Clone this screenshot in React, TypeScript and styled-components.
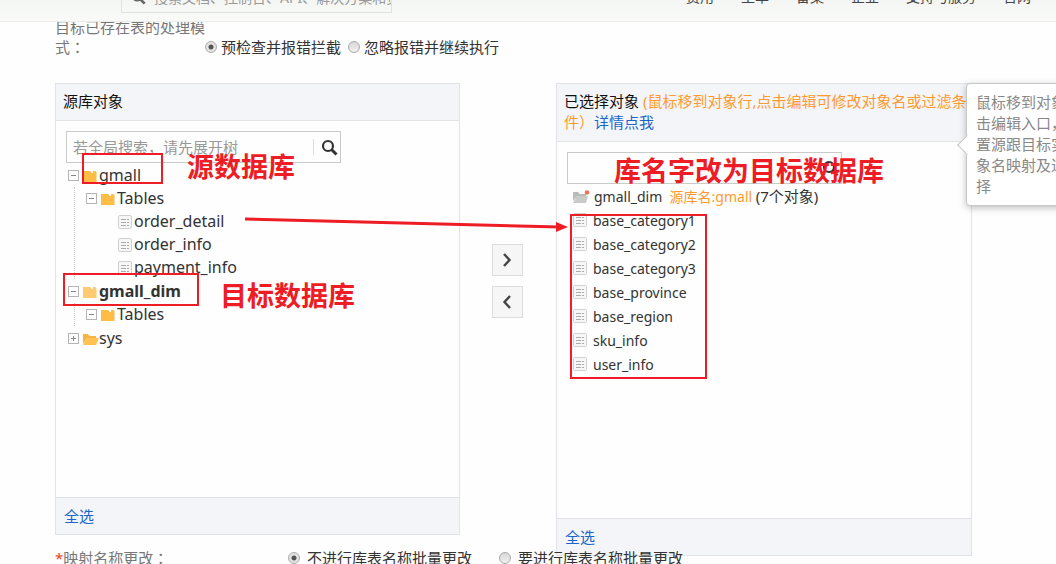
import React from "react";
import styled, { createGlobalStyle, css } from "styled-components";

const RED = "#ee1c25";

const GlobalStyle = createGlobalStyle`
  * { box-sizing: border-box; }
  html, body { margin: 0; padding: 0; }
  body {
    background: #fdfefd;
    color: #333;
    font-family: "Noto Sans", "Noto Sans CJK SC", sans-serif;
    font-size: 15px;
    line-height: 21px;
    overflow: hidden;
  }
  ul { list-style: none; margin: 0; padding: 0; }
  button, input { font: inherit; color: inherit; }
`;

const Page = styled.div`
  overflow: hidden;
`;

const TopBar = styled.header`
  position: relative;
  z-index: 2;
  display: flex;
  align-items: flex-end;
  justify-content: space-between;
  height: 22px;
  padding: 0 25px 0 121px;
  overflow: hidden;
  background: linear-gradient(#f4f6f4, #fafbf9);
  border-bottom: 1px solid #ebedeb;
`;

const TopSearch = styled.label`
  display: flex;
  flex-shrink: 0;
  align-items: center;
  gap: 8px;
  width: 271px;
  height: 32px;
  margin-bottom: 8px;
  padding-left: 9px;
  border: 1px solid #e0e2e0;
  color: #666;
  font-size: 14px;
`;

const BareInput = styled.input`
  flex: 1;
  min-width: 0;
  height: 100%;
  padding: 0;
  border: 0;
  outline: 0;
  background: transparent;
  &::placeholder { color: #999; opacity: 1; }
`;

const Nav = styled.nav`
  display: flex;
  gap: 27px;
  margin-bottom: 14px;
  font-size: 14px;
`;

const NavLink = styled.a`
  color: #444;
  text-decoration: none;
  white-space: nowrap;
`;

const Main = styled.main`
  margin-top: -5px;
  padding: 0 84px 0 55px;
`;

const Field = styled.div`
  position: relative;
  display: flex;
  align-items: flex-end;
  line-height: 20px;
`;

const ModeField = styled(Field)`
  margin-bottom: 26px;
`;

const MappingField = styled(Field)`
  margin-top: -8px;
`;

const FieldLabel = styled.span<{ $width: number }>`
  flex-shrink: 0;
  width: ${(p) => p.$width}px;
  color: #777;
`;

const Colon = styled.span`
  font-family: "Noto Sans CJK TC", sans-serif;
  line-height: 1;
`;

const Required = styled.span`
  color: #f04020;
`;

const Options = styled.div<{ $gap: number }>`
  display: flex;
  gap: ${(p) => p.$gap}px;
  white-space: nowrap;
`;

const Option = styled.label<{ $gap: number }>`
  display: flex;
  align-items: center;
  gap: ${(p) => p.$gap}px;
`;

const Radio = styled.input`
  appearance: none;
  width: 12px;
  height: 12px;
  margin: 0;
  border: 1px solid #aaa;
  border-radius: 50%;
  background: linear-gradient(#d8d8d8, #f0f0f0);
  &:checked { background: radial-gradient(circle, #555 0 2px, #e4e4e4 3px); }
`;

const Transfer = styled.section`
  display: grid;
  grid-template-columns: minmax(0, 405fr) 96px minmax(0, 416fr);
  align-items: start;
`;

const Panel = styled.section`
  position: relative;
  border: 1px solid #e1e3e6;
`;

const PanelHead = styled.header`
  padding: 7px 2px 8px 7px;
  border-bottom: 1px solid #e1e3e6;
  background: #f4f5f9;
  color: #111;
`;

const PanelBody = styled.div`
  height: 376px;
  padding: 10px;
`;

const PanelFoot = styled.footer`
  padding: 8px 8px 7px;
  border-top: 1px solid #e1e3e6;
  background: #f4f5f9;
`;

const Hint = styled.span`
  color: #ff9a2e;
`;

const Count = styled.span`
  font-size: 15px;
`;

const linkStyle = css`
  padding: 0;
  border: 0;
  background: none;
  color: #1a66c8;
  text-decoration: none;
  cursor: pointer;
`;

const TextLink = styled.a`${linkStyle}`;
const TextButton = styled.button`${linkStyle} display: block;`;

const SearchBox = styled.label`
  display: flex;
  align-items: center;
  width: 275px;
  max-width: 100%;
  height: 32px;
  padding-left: 6px;
  border: 1px solid #c8cbc8;
`;

const SearchButton = styled.button<{ $divided?: boolean }>`
  display: flex;
  align-items: center;
  justify-content: center;
  width: 27px;
  height: 16px;
  padding: 0 0 0 4px;
  border: 0;
  border-left: 1px solid ${(p) => (p.$divided ? "#ddd" : "transparent")};
  background: none;
`;

const Branch = styled.ul<{ $line?: boolean }>`
  margin-left: ${(p) => (p.$line ? 6 : 12)}px;
  padding-left: ${(p) => (p.$line ? 11 : 20)}px;
  border-left: ${(p) => (p.$line ? "1px dotted #ccc" : "0")};
`;

const TreeRoot = styled.ul`
  margin-left: 2px;
  font-size: 16px;
`;

const RootNode = styled.li`
  padding-top: 1px;
`;

const NodeRow = styled.div<{ $bold?: boolean }>`
  display: flex;
  align-items: center;
  height: 23px;
  font-weight: ${(p) => (p.$bold ? 700 : 400)};
`;

const Toggle = styled.button`
  display: flex;
  width: 11px;
  height: 11px;
  margin-right: 4px;
  padding: 0;
  border: 0;
  background: none;
`;

const NodeIcon = styled.span<{ $gap: number }>`
  display: flex;
  margin-right: ${(p) => p.$gap}px;
`;

const TargetList = styled.ul`
  margin-left: 6px;
  font-size: 14px;
`;

const TargetRow = styled.li`
  display: flex;
  align-items: center;
  height: 24px;
`;

const Moves = styled.div`
  display: flex;
  flex-direction: column;
  align-items: center;
  gap: 10px;
  padding: 161px 2px 0 0;
`;

const MoveButton = styled.button`
  display: flex;
  align-items: center;
  justify-content: center;
  width: 31px;
  height: 32px;
  padding: 0;
  border: 1px solid #dcdedc;
  background: #f5f6f5;
`;

const Tooltip = styled.aside`
  position: absolute;
  z-index: 1;
  top: -1px;
  left: calc(100% - 5px);
  width: 140px;
  padding: 8px 9px;
  border: 1px solid #c6c8c6;
  border-radius: 4px;
  background: #fff;
  box-shadow: 0 2px 7px rgba(0, 0, 0, 0.25);
  color: #888;
  &::before {
    content: "";
    position: absolute;
    top: 54px;
    left: -7px;
    width: 13px;
    height: 13px;
    border: solid #c6c8c6;
    border-width: 0 0 1px 1px;
    background: #fff;
    transform: rotate(45deg);
  }
`;

type Spot = { $x: number; $y: number };

const MarkBox = styled.div<Spot & { $w: number; $h: number }>`
  position: absolute;
  left: ${(p) => p.$x}px;
  top: ${(p) => p.$y}px;
  width: ${(p) => p.$w}px;
  height: ${(p) => p.$h}px;
  border: 2px solid ${RED};
  pointer-events: none;
`;

const MarkText = styled.strong<Spot>`
  position: absolute;
  left: ${(p) => p.$x}px;
  top: ${(p) => p.$y}px;
  color: ${RED};
  font-size: 27px;
  line-height: 32px;
  white-space: nowrap;
  pointer-events: none;
`;

const MarkArrow = styled.svg<Spot>`
  position: absolute;
  z-index: 1;
  left: ${(p) => p.$x}px;
  top: ${(p) => p.$y}px;
  pointer-events: none;
`;

const Magnifier = ({ size = 17, color = "#333" }) => (
  <svg width={size} height={size} viewBox="0 0 17 17" fill="none" stroke={color}>
    <circle cx="7" cy="7" r="5" strokeWidth="2.2" />
    <path d="M10.500 10.500l5 5" strokeWidth="3" />
  </svg>
);

const ToggleIcon = ({ open }: { open: boolean }) => (
  <svg width="11" height="11" fill="none" stroke="#b4b4b4">
    <rect x="0.5" y="0.5" width="10" height="10" />
    <path d={open ? "M3 5.5h5" : "M3 5.5h5M5.5 3v5"} stroke="#888" />
  </svg>
);

const Folder = ({ pale }: { pale?: boolean }) => (
  <svg width="14" height="12">
    <path d="M0 1h7l2 2h1V1h2.500l1 1v10H0z" fill={pale ? "#ffcb70" : "#ffbd45"} />
  </svg>
);

const FolderOpen = () => (
  <svg width="16" height="12">
    <path d="M0 11V1h5l1.5 2H13v2H4z" fill="#f8b443" />
    <path d="M3.5 5H16l-3 7H0z" fill="#ffc253" />
  </svg>
);

const FolderGrey = () => (
  <svg width="17" height="13">
    <path d="M0 11V2h5l1.5 2H13v2H4z" fill="#b9bbb9" />
    <path d="M3.5 6H15l-2 7H0z" fill="#c9cbc9" />
    <circle cx="14" cy="2.5" r="2.2" fill="#f0704a" />
  </svg>
);

const TableIcon = () => (
  <svg width="14" height="14" fill="none">
    <rect x="0.5" y="0.5" width="13" height="13" rx="1.5" fill="#f6f7f6" stroke="#cfd1cf" />
    <path d="M3 4.500h5M3 7.500h5M3 10.500h5M9 4.500h2M9 7.500h2M9 10.500h2" stroke="#aaa" />
  </svg>
);

const Chevron = ({ left }: { left?: boolean }) => (
  <svg width="12" height="16" fill="none" stroke="#444" strokeWidth="2.4">
    <path d={left ? "M9 2L3.5 8 9 14" : "M3 2l5.500 6L3 14"} />
  </svg>
);

const Node = ({ name, bold, open = true }: { name: string; bold?: boolean; open?: boolean }) => (
  <NodeRow $bold={bold}>
    <Toggle type="button" aria-label={`${open ? "收起" : "展开"} ${name}`}>
      <ToggleIcon open={open} />
    </Toggle>
    <NodeIcon $gap={open ? 2 : 0}>{open ? <Folder pale={bold} /> : <FolderOpen />}</NodeIcon>
    {name}
  </NodeRow>
);

const NAV = ["费用", "工单", "备案", "企业", "支持与服务", "官网"];
const SOURCE_TABLES = ["order_detail", "order_info", "payment_info"];
const TARGET_TABLES = [
  "base_category1",
  "base_category2",
  "base_category3",
  "base_province",
  "base_region",
  "sku_info",
  "user_info",
];

export default function App() {
  return (
    <Page>
      <GlobalStyle />
      <TopBar>
        <TopSearch>
          <Magnifier size={15} color="#666" />
          <BareInput aria-label="搜索" placeholder="搜索文档、控制台、API、解决方案和资源" />
        </TopSearch>
        <Nav>
          {NAV.map((item) => (
            <NavLink href="#" key={item}>{item}</NavLink>
          ))}
        </Nav>
      </TopBar>

      <Main>
        <ModeField role="radiogroup" aria-label="目标已存在表的处理模式">
          <FieldLabel $width={150}>目标已存在表的处理模式<Colon>：</Colon></FieldLabel>
          <Options $gap={7}>
            <Option $gap={4}>
              <Radio type="radio" name="mode" defaultChecked />
              预检查并报错拦截
            </Option>
            <Option $gap={4}>
              <Radio type="radio" name="mode" />
              忽略报错并继续执行
            </Option>
          </Options>
        </ModeField>

        <Transfer>
          <Panel>
            <PanelHead>源库对象</PanelHead>
            <PanelBody>
              <SearchBox>
                <BareInput aria-label="搜索源库对象" placeholder="若全局搜索，请先展开树" />
                <SearchButton type="button" aria-label="搜索" $divided>
                  <Magnifier />
                </SearchButton>
              </SearchBox>
              <TreeRoot>
                <RootNode>
                  <Node name="gmall" />
                  <Branch $line>
                    <li>
                      <Node name="Tables" />
                      <Branch>
                        {SOURCE_TABLES.map((name) => (
                          <li key={name}>
                            <NodeRow>
                              <NodeIcon $gap={2}><TableIcon /></NodeIcon>
                              {name}
                            </NodeRow>
                          </li>
                        ))}
                      </Branch>
                    </li>
                  </Branch>
                </RootNode>
                <RootNode>
                  <Node name="gmall_dim" bold />
                  <Branch $line>
                    <li><Node name="Tables" /></li>
                  </Branch>
                </RootNode>
                <RootNode>
                  <Node name="sys" open={false} />
                </RootNode>
              </TreeRoot>
            </PanelBody>
            <PanelFoot><TextButton type="button">全选</TextButton></PanelFoot>
            <MarkBox $x={26} $y={69} $w={81} $h={31} />
            <MarkText $x={131} $y={67}>源数据库</MarkText>
            <MarkBox $x={7} $y={189} $w={136} $h={33} />
            <MarkText $x={164} $y={196}>目标数据库</MarkText>
            <MarkArrow $x={188} $y={128} width="326" height="24">
              <path d="M1 7L316 15" stroke={RED} strokeWidth="3" />
              <path d="M312 10L324 15L312 20z" fill={RED} />
            </MarkArrow>
          </Panel>

          <Moves>
            <MoveButton type="button" aria-label="添加"><Chevron /></MoveButton>
            <MoveButton type="button" aria-label="移除"><Chevron left /></MoveButton>
          </Moves>

          <Panel>
            <PanelHead>
              已选择对象 <Hint>(鼠标移到对象行,点击编辑可修改对象名或过滤条件）</Hint>
              <TextLink href="#">详情点我</TextLink>
            </PanelHead>
            <PanelBody>
              <SearchBox>
                <BareInput aria-label="搜索已选择对象" />
                <SearchButton type="button" aria-label="搜索">
                  <Magnifier />
                </SearchButton>
              </SearchBox>
              <TargetList>
                <TargetRow>
                  <NodeIcon $gap={4}><FolderGrey /></NodeIcon>
                  <span>gmall_dim&nbsp; <Hint>源库名:gmall</Hint> <Count>(7个对象)</Count></span>
                </TargetRow>
                {TARGET_TABLES.map((name) => (
                  <TargetRow key={name}>
                    <NodeIcon $gap={6}><TableIcon /></NodeIcon>
                    {name}
                  </TargetRow>
                ))}
              </TargetList>
            </PanelBody>
            <PanelFoot><TextButton type="button">全选</TextButton></PanelFoot>
            <MarkText $x={57} $y={71}>库名字改为目标数据库</MarkText>
            <MarkBox $x={13} $y={130} $w={137} $h={165} />
            <Tooltip>鼠标移到对象行点击编辑入口，可配置源跟目标实例对象名映射及过滤选择</Tooltip>
          </Panel>
        </Transfer>

        <MappingField role="radiogroup" aria-label="映射名称更改">
          <FieldLabel $width={233}><Required>*</Required>映射名称更改<Colon>：</Colon></FieldLabel>
          <Options $gap={27}>
            <Option $gap={7}>
              <Radio type="radio" name="mapping" defaultChecked />
              不进行库表名称批量更改
            </Option>
            <Option $gap={7}>
              <Radio type="radio" name="mapping" />
              要进行库表名称批量更改
            </Option>
          </Options>
        </MappingField>
      </Main>
    </Page>
  );
}
